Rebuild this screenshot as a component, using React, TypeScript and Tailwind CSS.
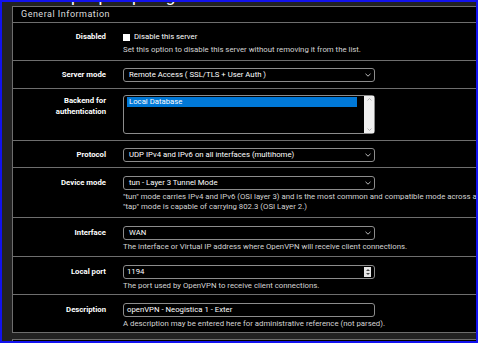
import React from "react";

function Chevron() {
  return (
    <svg width="6" height="4" viewBox="0 0 6 4" className="shrink-0">
      <path d="M0.5 0.8 L3 3.2 L5.5 0.8" fill="none" stroke="#cfcfcf" strokeWidth="0.9" />
    </svg>
  );
}

function Select({ value }: { value: string }) {
  return (
    <div className="flex h-[14px] w-[252px] items-center justify-between rounded-[3px] border border-[#8c8c8c] bg-black pl-[5px] pr-[3px] text-[7.75px] leading-none text-white">
      <span>{value}</span>
      <Chevron />
    </div>
  );
}

function Help({ children }: { children: React.ReactNode }) {
  return <div className="mt-[2px] whitespace-nowrap text-[7.8px] leading-[10px] text-[#d4d4d4]">{children}</div>;
}

function Row({
  label,
  children,
  className = "pt-[8px] pb-[4px]",
  labelClass = "leading-[14px]",
}: {
  label: React.ReactNode;
  children: React.ReactNode;
  className?: string;
  labelClass?: string;
}) {
  return (
    <div className={`flex items-start border-b border-[#6e6e6e] ${className}`}>
      <div className={`w-[93px] shrink-0 text-right text-[7.75px] font-bold text-white ${labelClass}`}>{label}</div>
      <div className="ml-[17px] flex flex-col">{children}</div>
    </div>
  );
}

export default function App() {
  return (
    <div className="h-[343px] w-[478px] overflow-hidden border-2 border-[#1212ee] bg-[#222] font-[Roboto,sans-serif]">
      <div className="flex h-[4px] items-end overflow-hidden text-[17px] leading-none text-white">
        <span className="ml-[69px] mb-[1.5px]">p</span>
        <span className="ml-[18px] mb-[1.5px]">p</span>
        <span className="ml-[24px] mb-[1.5px]">p</span>
        <span className="ml-[24px] mb-[1.5px]">g</span>
      </div>

      <div className="ml-[10px] w-[720px] border-l border-t border-[#6e6e6e] bg-black">
        <div className="flex h-[16px] items-center border-b border-[#6e6e6e] pl-[8px] text-[9px] tracking-[0.5px] text-[#dedede]">
          General Information
        </div>

        <Row label="Disabled" className="pt-[8px] pb-[5px]" labelClass="leading-[12px]">
          <div className="flex h-[12px] items-center gap-[4px] text-[7.75px] text-white">
            <span className="h-[7px] w-[7px] bg-white" />
            <span>Disable this server</span>
          </div>
          <Help>Set this option to disable this server without removing it from the list.</Help>
        </Row>

        <Row label="Server mode" className="pt-[7px] pb-[6px]">
          <Select value="Remote Access ( SSL/TLS + User Auth )" />
        </Row>

        <Row
          label={
            <>
              Backend for
              <br />
              authentication
            </>
          }
          className="pt-[6px] pb-[6px]"
          labelClass="leading-[11px]"
        >
          <div className="flex h-[39px] w-[252px] rounded-[3px] border border-[#8c8c8c] bg-black">
            <div className="flex-1 pl-[3px] pr-[7px] pt-[1px]">
              <div className="h-[10px] bg-[#0078d7] pl-[2px] text-[7.75px] leading-[10px] text-white">Local Database</div>
            </div>
            <div className="flex w-[10px] flex-col items-center justify-between bg-[#f0f0f0] py-[2px]">
              <svg width="5" height="3" viewBox="0 0 5 3">
                <path d="M0.5 2.5 L2.5 0.5 L4.5 2.5" fill="none" stroke="#a3a3a3" strokeWidth="0.8" />
              </svg>
              <svg width="5" height="3" viewBox="0 0 5 3">
                <path d="M0.5 0.5 L2.5 2.5 L4.5 0.5" fill="none" stroke="#a3a3a3" strokeWidth="0.8" />
              </svg>
            </div>
          </div>
        </Row>

        <Row label="Protocol" className="pt-[7px] pb-[5px]">
          <Select value="UDP IPv4 and IPv6 on all interfaces (multihome)" />
        </Row>

        <Row label="Device mode" className="pt-[8px] pb-[5px]">
          <Select value="tun - Layer 3 Tunnel Mode" />
          <Help>
            "tun" mode carries IPv4 and IPv6 (OSI layer 3) and is the most common and compatible mode across all platforms.
            <br />
            "tap" mode is capable of carrying 802.3 (OSI Layer 2.)
          </Help>
        </Row>

        <Row label="Interface" className="pt-[8px] pb-[4px]">
          <Select value="WAN" />
          <Help>The interface or Virtual IP address where OpenVPN will receive client connections.</Help>
        </Row>

        <Row label="Local port" className="pt-[8px] pb-[3px]">
          <div className="flex h-[14px] w-[252px] items-center justify-between rounded-[3px] border border-[#8c8c8c] bg-black pl-[3px] pr-[3px] text-[7.75px] leading-none text-white">
            <span>1194</span>
            <div className="flex h-[10px] w-[7px] flex-col items-center justify-center gap-[2px] bg-[#e6e6e6]">
              <span className="h-0 w-0 border-x-[2px] border-b-[2px] border-x-transparent border-b-[#444]" />
              <span className="h-0 w-0 border-x-[2px] border-t-[2px] border-x-transparent border-t-[#444]" />
            </div>
          </div>
          <Help>The port used by OpenVPN to receive client connections.</Help>
        </Row>

        <Row label="Description" className="pt-[8px] pb-[3px]">
          <div className="flex h-[14px] w-[252px] items-center rounded-[3px] border border-[#8c8c8c] bg-black pl-[3px] text-[7.75px] leading-none text-white">
            openVPN - Neogistica 1 - Exter
          </div>
          <Help>A description may be entered here for administrative reference (not parsed).</Help>
        </Row>
      </div>

      <div className="ml-[10px] mt-[6px] h-[20px] w-[720px] border-l border-t border-[#6e6e6e] bg-black" />
    </div>
  );
}
